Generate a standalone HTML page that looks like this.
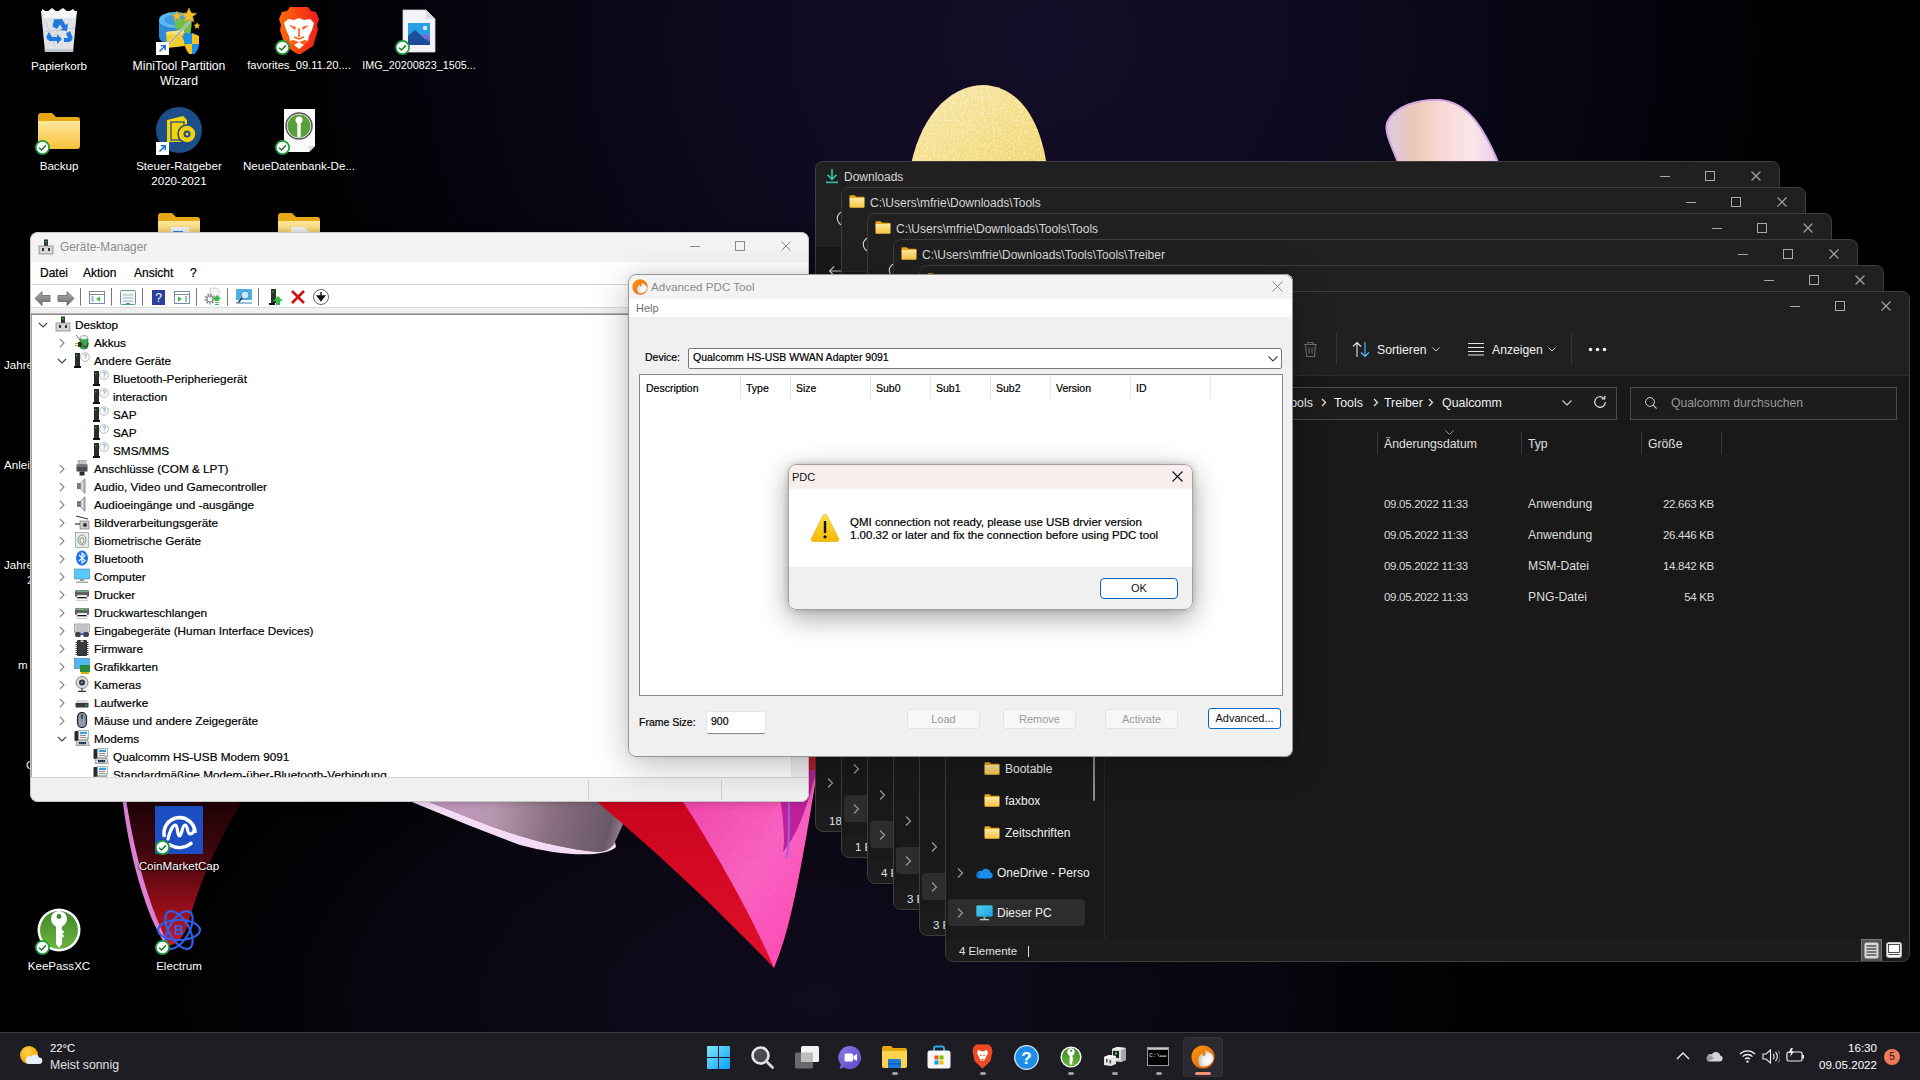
<!DOCTYPE html><html><head><meta charset="utf-8"><style>
*{box-sizing:border-box;margin:0;padding:0}
html,body{width:1920px;height:1080px;overflow:hidden}
body{position:relative;font-family:"Liberation Sans",sans-serif;background:#000;color:#000}
.abs{position:absolute}
.wp{position:absolute;left:0;top:0}
.t{position:absolute;white-space:nowrap;line-height:1}
.dl{color:#fff;font-size:11.6px;text-shadow:0 0 2px #000,0 1px 2px #000}
.expl{background:#202020;border-radius:8px;overflow:hidden}
.expl::after{content:"";position:absolute;left:0;top:0;right:0;bottom:0;border:1px solid #3d3d3d;border-radius:8px}
.expl .cont{background:#191919}
.ttl{color:#d6d6d6;font-size:12px}
.stt{color:#e0e0e0;font-size:11.5px}
.tb{color:#f0f0f0;font-size:12.2px}
.adr{color:#f0f0f0;font-size:12.4px}
.srch{color:#9a9a9a;font-size:12.2px}
.col{color:#e0e0e0;font-size:12.2px}
.fr{color:#dcdcdc;font-size:12.2px}
.frd{color:#dcdcdc;font-size:11.5px;letter-spacing:-0.3px}
.nav{color:#f0f0f0;font-size:12px}
.dm{background:#f3f3f3;border-radius:8px;overflow:hidden;box-shadow:0 0 8px rgba(0,0,0,0.25)}
.dm::after{content:"";position:absolute;left:0;top:0;right:0;bottom:0;border:1px solid #c4c4c4;border-radius:8px}
.dmttl{color:#8c8c8c;font-size:11.9px}
.dmm{color:#000;font-size:12px;-webkit-text-stroke:0.2px #000}
.dmt{color:#000;font-size:11.75px;-webkit-text-stroke:0.2px #000}
.pdc::after{content:"";position:absolute;left:0;top:0;right:0;bottom:0;border:1px solid rgba(0,0,0,0.38);border-radius:8px}
.pdc{background:#f0f0f0;border-radius:8px;overflow:hidden;box-shadow:0 8px 36px rgba(0,0,0,0.26),0 0 6px rgba(0,0,0,0.08)}
.pdcttl{color:#8a8a8a;font-size:11.6px}
.pdcm{color:#6e6e6e;font-size:11px}
.pdct{color:#000;font-size:10.5px;-webkit-text-stroke:0.2px #000}
.btnd{background:#f7f7f7;border:1px solid #e3e3e3;border-radius:3px;color:#9a9a9a;font-size:11px;text-align:center;line-height:19px}
.btna{background:#fdfdfd;border:1.5px solid #0067c0;border-radius:3px;color:#111;font-size:11px;text-align:center;line-height:18px}
.mb::after{content:"";position:absolute;left:0;top:0;right:0;bottom:0;border:1px solid rgba(0,0,0,0.33);border-radius:8px}
.mb{background:#fff;border-radius:8px;overflow:hidden;box-shadow:0 8px 28px rgba(0,0,0,0.35),0 0 6px rgba(0,0,0,0.2)}
.mbttl{color:#111;font-size:11px}
.mbt{color:#000;font-size:11.5px;-webkit-text-stroke:0.2px #000}
.btnok{background:#fff;border:1.5px solid #0067c0;border-radius:4px;color:#111;font-size:11px;text-align:center;line-height:18px}
.tbar{background:#1e1d24;border-top:1px solid #3a3a3f}
.tbw1{color:#fff;font-size:11.3px}
.tbw2{color:#e0e0e0;font-size:12.3px}
.tbc{color:#fff;font-size:11.6px}
</style></head><body><svg width="0" height="0" style="position:absolute"><defs>
<linearGradient id="fgrad" x1="0" y1="0" x2="0" y2="1"><stop offset="0" stop-color="#ffe9a0"/><stop offset="1" stop-color="#f7c440"/></linearGradient>
<linearGradient id="fgrad2" x1="0" y1="0" x2="0" y2="1"><stop offset="0" stop-color="#ffe79a"/><stop offset="1" stop-color="#f6c13a"/></linearGradient>
<linearGradient id="pcg" x1="0" y1="0" x2="1" y2="1"><stop offset="0" stop-color="#5ee0f8" stop-opacity="0.6"/><stop offset="1" stop-color="#1a90d8" stop-opacity="0.6"/></linearGradient>
</defs></svg>
<svg class="wp" width="1920" height="1080" viewBox="0 0 1920 1080">
<defs>
<radialGradient id="bgg" cx="1040" cy="40" r="760" gradientUnits="userSpaceOnUse" gradientTransform="translate(1040 40) scale(1 0.9) translate(-1040 -40)">
<stop offset="0" stop-color="#130d27"/><stop offset="0.4" stop-color="#0e0a1f"/><stop offset="0.75" stop-color="#06040e"/><stop offset="1" stop-color="#000"/>
</radialGradient>
<radialGradient id="bgg2" cx="820" cy="1000" r="640" gradientUnits="userSpaceOnUse" gradientTransform="translate(820 1000) scale(1.2 0.65) translate(-820 -1000)">
<stop offset="0" stop-color="#100b1e"/><stop offset="0.55" stop-color="#0b0814" stop-opacity="0.85"/><stop offset="1" stop-color="#000" stop-opacity="0"/>
</radialGradient>
<linearGradient id="yel" x1="0" y1="0" x2="1" y2="1"><stop offset="0" stop-color="#f6e6b0"/><stop offset="0.5" stop-color="#f5df8c"/><stop offset="1" stop-color="#f2d470"/></linearGradient>
<linearGradient id="pnk" x1="0" y1="0" x2="1" y2="0"><stop offset="0" stop-color="#e0c8e0"/><stop offset="0.25" stop-color="#ecc8b8"/><stop offset="0.45" stop-color="#f8d8d4"/><stop offset="0.75" stop-color="#fae6e8"/><stop offset="0.92" stop-color="#ecd0ec"/><stop offset="1" stop-color="#b890c8"/></linearGradient>
<linearGradient id="redg" x1="0" y1="0" x2="0" y2="1"><stop offset="0" stop-color="#c4001a"/><stop offset="1" stop-color="#e0102a"/></linearGradient>
<linearGradient id="pkg" x1="0" y1="0" x2="1" y2="1"><stop offset="0" stop-color="#e8309a"/><stop offset="0.6" stop-color="#f860c0"/><stop offset="1" stop-color="#ff40b0"/></linearGradient>
<linearGradient id="tipg" x1="0" y1="0" x2="0" y2="1"><stop offset="0" stop-color="#1a0306"/><stop offset="0.35" stop-color="#3a060c"/><stop offset="0.7" stop-color="#8a0c18"/><stop offset="1" stop-color="#c81a28"/></linearGradient>
<linearGradient id="bladeg" x1="412" y1="795" x2="640" y2="850" gradientUnits="userSpaceOnUse"><stop offset="0" stop-color="#c890c8"/><stop offset="0.35" stop-color="#b898b0"/><stop offset="0.6" stop-color="#8a7080"/><stop offset="0.85" stop-color="#6a5868"/><stop offset="1" stop-color="#d8c0d8"/></linearGradient>
<filter id="grain2" x="0" y="0" width="100%" height="100%"><feTurbulence type="fractalNoise" baseFrequency="0.45" numOctaves="2" seed="7"/><feColorMatrix values="0 0 0 0 1  0 0 0 0 0.97  0 0 0 0 0.85  0 0 0 2.2 -1.1"/><feComposite in2="SourceGraphic" operator="in"/></filter>
<filter id="grain" x="0" y="0" width="100%" height="100%"><feTurbulence type="fractalNoise" baseFrequency="0.9" numOctaves="1" seed="3"/><feColorMatrix values="0 0 0 0 1  0 0 0 0 1  0 0 0 0 0.7  0 0 0 1.6 -0.9"/><feComposite in2="SourceGraphic" operator="in"/></filter>
</defs>
<rect width="1920" height="1080" fill="url(#bgg)"/>
<rect width="1920" height="1080" fill="url(#bgg2)"/>
<!-- yellow blob -->
<path d="M909 175 C918 118 948 86 983 85 C1018 86 1042 118 1048 175 Z" fill="url(#yel)"/>
<path d="M909 175 C918 118 948 86 983 85 C1018 86 1042 118 1048 175 Z" fill="#fff" filter="url(#grain2)" opacity="0.9"/>
<!-- pink top-right shape -->
<path d="M1403 175 C1394 150 1384 134 1387 123 C1394 106 1418 99 1440 100 C1466 102 1484 124 1503 175 Z" fill="url(#pnk)" stroke="#cfa8e0" stroke-width="2"/>
<!-- bottom left petal tip -->
<path d="M122 795 C128 850 145 915 166 945 C172 947 180 942 186 930 C194 905 205 860 246 795 Z" fill="url(#tipg)"/>
<path d="M122 795 C128 850 145 915 166 945 L169 945 C151 912 134 855 125.5 795 Z" fill="#e088e0" opacity="0.95"/>
<!-- pale blade -->
<path d="M412 795 L470 818 C520 838 560 849 598 852 C606 852 612 848 615 842 L636 795 Z" fill="url(#bladeg)"/>
<path d="M412 795 L470 818 C520 838 560 849 598 852 C606 852 612 848 615 842 L616 847 C605 858 560 856 520 845 L468 825 L412 802Z" fill="#f3dcf3"/>
<!-- red wedge -->
<path d="M520 740 C600 800 700 890 774 968 C790 930 800 880 822 740 Z" fill="url(#redg)"/>
<path d="M640 740 C700 820 752 915 774 968 C790 930 800 880 822 740 Z" fill="url(#pkg)"/>
<path d="M640 740 C700 820 752 915 774 968 C790 930 800 880 822 740 Z" fill="#fff" filter="url(#grain)" opacity="0.35"/>
<path d="M770 740 C782 800 786 835 783 852 C797 835 808 810 824 740Z" fill="#c0209a"/>
<path d="M786 740 C790 800 790 850 786 858" stroke="#9a60e0" stroke-width="2" fill="none"/>
<path d="M808 740 L822 740 L818 770 L808 770Z" fill="#c81a2a"/>
</svg><svg class="abs" style="left:35px;top:6px" width="48" height="48" viewBox="0 0 48 48"><path d="M6 5 L42 5 L38 46 L10 46Z" fill="#dfe3e8"/><path d="M6 5 L42 5 L40 12 L8 12Z" fill="#f4f6f8"/><path d="M7 3 L12 6 L17 2 L22 6 L28 2 L33 6 L38 3 L41 6 L7 6Z" fill="#fafafa"/><path d="M10 14 L20 40 M18 12 L36 30 M30 14 L14 38 M8 26 L40 22" stroke="#c6ccd4" stroke-width="1"/><path d="M10 46 L38 46 L38.5 43 L9.5 43Z" fill="#bfc5cc"/><g fill="#1f7ae0"><path d="M19 13.5 L27 13 L30.5 19 L33 17.5 L32 25 L25 24 L27.5 22.5 L25 18.5 L22 23 L17.5 20.5Z"/><path d="M14 26 L17 31 L22 31 L22 28 L27 33 L22 38 L22 35 L15 35 Q11 34 11.5 30Z"/><path d="M35 25 L37.5 31 Q38 35 34 36 L29 36 L29 32 L33 32 L31 27.5Z"/></g></svg><div class="t dl" style="left:-1px;top:60px;width:120px;text-align:center">Papierkorb</div><svg class="abs" style="left:155px;top:6px" width="48" height="48" viewBox="0 0 48 48"><path d="M4 14 V30 Q4 38 20 38 Q36 38 36 30 V14Z" fill="#2f8ad8"/><ellipse cx="20" cy="14" rx="16" ry="8" fill="#5cb8f0"/><ellipse cx="20" cy="14" rx="11" ry="5" fill="#3e9de0"/><path d="M20 14 L36 12 Q38 22 34 28 L20 22Z" fill="#6cc04a"/><path d="M11 26 L28 24 L30 40 L12 42Z" fill="#f2cf2a"/><path d="M11 26 L28 24 L30 27 L13 29Z" fill="#fae27a"/><path d="M14 38 L38 12" stroke="#e0e0e0" stroke-width="2.2"/><path d="M14 38 L38 12" stroke="#666" stroke-width="0.8"/><path d="M34 2 L36.3 7 L41.5 7.4 L37.5 10.8 L38.8 16 L34 13.2 L29.2 16 L30.5 10.8 L26.5 7.4 L31.7 7Z" fill="#f0c028" stroke="#c89a10" stroke-width="0.6"/><path d="M22 5 L23.5 8.5 L27 8.7 L24.3 11 L25.2 14.5 L22 12.6 L18.8 14.5 L19.7 11 L17 8.7 L20.5 8.5Z" fill="#f0c028" stroke="#c89a10" stroke-width="0.5"/><path d="M42 16 L43 18.5 L45.5 18.7 L43.6 20.3 L44.2 22.8 L42 21.5 L39.8 22.8 L40.4 20.3 L38.5 18.7 L41 18.5Z" fill="#f0c028"/><path d="M27 30 L38 27 L44 30 V38 Q44 45 37 50 Q30 45 30 38Z" fill="#1f8ee8"/><path d="M37 27.5 L44 30 V38 H37Z" fill="#f6c21a"/><path d="M30 38 H37 V50 Q30 45 30 38Z" fill="#f6c21a"/></svg><svg class="abs" style="left:156px;top:42px" width="13" height="13" viewBox="0 0 13 13"><rect x="0" y="0" width="13" height="13" fill="#fff"/><path d="M3.5 9.5L9 4M5 3.8H9.2V8" stroke="#1a6fd0" stroke-width="1.5" fill="none"/></svg><div class="t dl" style="font-size:12.2px;left:119px;top:60px;width:120px;text-align:center">MiniTool Partition</div><div class="t dl" style="font-size:12.2px;left:119px;top:75px;width:120px;text-align:center">Wizard</div><svg class="abs" style="left:275px;top:6px" width="48" height="48" viewBox="0 0 48 48"><defs><linearGradient id="brg" x1="0" y1="0" x2="1" y2="0"><stop offset="0" stop-color="#ff6a00"/><stop offset="1" stop-color="#f01e1e"/></linearGradient></defs><path d="M15 1 H33 L36 5 L41 6 L44 13 L42 19 L43 24 L38 40 L24 49 L10 40 L5 24 L6 19 L4 13 L7 6 L12 5Z" fill="url(#brg)"/><path d="M9 17 L13 13 L19 14 L24 12 L29 14 L35 13 L39 17 L37 24 L34 30 L33 35 L28 39 L24 41 L20 39 L15 35 L14 30 L11 24Z" fill="#fff"/><path d="M14 19 L21 21 L20 24 Z M34 19 L27 21 L28 24Z" fill="#ff5a10"/><path d="M24 22 L24 31 M19 31 L24 33 L29 31" stroke="#ff5a10" stroke-width="1.6" fill="none"/><path d="M15 35 L20 39 L24 41 L28 39 L33 35 L30 34 L24 36 L18 34Z" fill="#ff5a10"/><path d="M19 39 L24 36 L29 39 L24 43Z" fill="#fff"/></svg><svg class="abs" style="left:275px;top:40px" width="15" height="15" viewBox="0 0 14 14"><circle cx="7" cy="7" r="6.2" fill="#fff" stroke="#1e9e3a" stroke-width="1.6"/><path d="M3.8 7.2L6 9.3L10.2 5" stroke="#1a7f30" stroke-width="1.5" fill="none"/></svg><div class="t dl" style="font-size:11.2px;left:239px;top:60px;width:120px;text-align:center">favorites_09.11.20....</div><svg class="abs" style="left:395px;top:6px" width="48" height="48" viewBox="0 0 48 48"><path d="M8 4 H31 L40 13 V46 H8Z" fill="#f4f4f6" stroke="#d8d8dc" stroke-width="0.8"/><path d="M31 4 V13 H40Z" fill="#dcdce0"/><rect x="13" y="17" width="22" height="22" fill="#28a0e8"/><path d="M13 39 V30 L20 24 L30 33 L33 31 L35 33 V39Z" fill="#1c4c9a"/><path d="M26 30 L31 27 L35 31 V36Z" fill="#7a6ad8" opacity="0.9"/><circle cx="30" cy="22" r="2.2" fill="#d8ecf8"/></svg><svg class="abs" style="left:395px;top:40px" width="15" height="15" viewBox="0 0 14 14"><circle cx="7" cy="7" r="6.2" fill="#fff" stroke="#1e9e3a" stroke-width="1.6"/><path d="M3.8 7.2L6 9.3L10.2 5" stroke="#1a7f30" stroke-width="1.5" fill="none"/></svg><div class="t dl" style="font-size:10.8px;left:359px;top:60px;width:120px;text-align:center">IMG_20200823_1505...</div><svg class="abs" style="left:35px;top:106px" width="48" height="48" viewBox="0 0 48 48"><path d="M3 10 Q3 7 6 7 H17 L21 11 H42 Q45 11 45 14 V17 H3Z" fill="#e8a716"/><path d="M3 15 H45 V40 Q45 43 42 43 H6 Q3 43 3 40Z" fill="url(#fgrad2)"/></svg><svg class="abs" style="left:35px;top:140px" width="15" height="15" viewBox="0 0 14 14"><circle cx="7" cy="7" r="6.2" fill="#fff" stroke="#1e9e3a" stroke-width="1.6"/><path d="M3.8 7.2L6 9.3L10.2 5" stroke="#1a7f30" stroke-width="1.5" fill="none"/></svg><div class="t dl" style="left:-1px;top:160px;width:120px;text-align:center">Backup</div><svg class="abs" style="left:155px;top:106px" width="48" height="48" viewBox="0 0 48 48"><circle cx="24" cy="24" r="23" fill="#1c4f8a"/><path d="M12 36 L12 14 L28 10 L32 14 V36Z" fill="#f5d20a"/><rect x="16" y="16" width="13" height="18" fill="#f5d20a" stroke="#1c4f8a" stroke-width="1.3"/><circle cx="32" cy="28" r="9" fill="#f5d20a" stroke="#1c4f8a" stroke-width="1.5"/><circle cx="32" cy="28" r="3.5" fill="#1c4f8a"/><circle cx="32" cy="28" r="1.5" fill="#f5d20a"/></svg><svg class="abs" style="left:156px;top:142px" width="13" height="13" viewBox="0 0 13 13"><rect x="0" y="0" width="13" height="13" fill="#fff"/><path d="M3.5 9.5L9 4M5 3.8H9.2V8" stroke="#1a6fd0" stroke-width="1.5" fill="none"/></svg><div class="t dl" style="left:119px;top:160px;width:120px;text-align:center">Steuer-Ratgeber</div><div class="t dl" style="left:119px;top:175px;width:120px;text-align:center">2020-2021</div><svg class="abs" style="left:275px;top:106px" width="48" height="48" viewBox="0 0 48 48"><path d="M9 3 H40 V40 L34 46 H9Z" fill="#fafafa"/><path d="M34 46 V40 H40" fill="#ddd"/><circle cx="24" cy="20" r="13" fill="#fff" stroke="#555" stroke-width="1.5"/><circle cx="24" cy="20" r="11.5" fill="#5aa03a"/><circle cx="24" cy="14" r="3.5" fill="#fff"/><rect x="22.3" y="16" width="3.4" height="15" fill="#fff"/></svg><svg class="abs" style="left:275px;top:140px" width="15" height="15" viewBox="0 0 14 14"><circle cx="7" cy="7" r="6.2" fill="#fff" stroke="#1e9e3a" stroke-width="1.6"/><path d="M3.8 7.2L6 9.3L10.2 5" stroke="#1a7f30" stroke-width="1.5" fill="none"/></svg><div class="t dl" style="left:239px;top:160px;width:120px;text-align:center">NeueDatenbank-De...</div><svg class="abs" style="left:155px;top:206px" width="48" height="48" viewBox="0 0 48 48"><path d="M3 10 Q3 7 6 7 H17 L21 11 H42 Q45 11 45 14 V17 H3Z" fill="#e8a716"/><path d="M3 15 H45 V40 Q45 43 42 43 H6 Q3 43 3 40Z" fill="url(#fgrad2)"/><rect x="16" y="21" width="18" height="20" fill="#f0f4f8"/><rect x="18" y="25" width="10" height="8" fill="#2a8ae0"/></svg><svg class="abs" style="left:275px;top:206px" width="48" height="48" viewBox="0 0 48 48"><path d="M3 10 Q3 7 6 7 H17 L21 11 H42 Q45 11 45 14 V17 H3Z" fill="#e8a716"/><path d="M3 15 H45 V40 Q45 43 42 43 H6 Q3 43 3 40Z" fill="url(#fgrad2)"/><path d="M16 21 H29 L34 26 V43 H16Z" fill="#f4f4f4"/></svg><svg class="abs" style="left:155px;top:806px" width="48" height="48" viewBox="0 0 48 48"><rect x="0" y="0" width="48" height="48" fill="#1d4ec4"/><path d="M9.5 31 A15.5 15.5 0 1 1 40 27" stroke="#fff" stroke-width="3.6" fill="none"/><path d="M13 33 C15 24 18 19 20.5 19 C23 19 22 30 24.5 30 C27 30 27 19 30 19 C33 19 32 28 35 28 C37 28 38.5 26 39.5 24" stroke="#fff" stroke-width="3.2" fill="none" stroke-linecap="round"/><path d="M15 39 C22 43 30 42 36 37.5" stroke="#fff" stroke-width="3.6" fill="none" stroke-linecap="round"/></svg><svg class="abs" style="left:155px;top:840px" width="15" height="15" viewBox="0 0 14 14"><circle cx="7" cy="7" r="6.2" fill="#fff" stroke="#1e9e3a" stroke-width="1.6"/><path d="M3.8 7.2L6 9.3L10.2 5" stroke="#1a7f30" stroke-width="1.5" fill="none"/></svg><div class="t dl" style="left:119px;top:860px;width:120px;text-align:center">CoinMarketCap</div><svg class="abs" style="left:35px;top:906px" width="48" height="48" viewBox="0 0 48 48"><defs><linearGradient id="kpg" x1="0" y1="0" x2="0" y2="1"><stop offset="0" stop-color="#3f8a2a"/><stop offset="1" stop-color="#6cb43e"/></linearGradient></defs><circle cx="24" cy="24" r="21.5" fill="#fff"/><circle cx="24" cy="24" r="19" fill="url(#kpg)"/><circle cx="24" cy="13" r="8" fill="#fff"/><path d="M21 18 H27 V24 L29.5 26 L27 28 L29.5 30 L27 32 V38 L24 42 L21 38Z" fill="#fff"/><circle cx="24" cy="10.5" r="2.4" fill="#3f8a2a"/></svg><svg class="abs" style="left:35px;top:940px" width="15" height="15" viewBox="0 0 14 14"><circle cx="7" cy="7" r="6.2" fill="#fff" stroke="#1e9e3a" stroke-width="1.6"/><path d="M3.8 7.2L6 9.3L10.2 5" stroke="#1a7f30" stroke-width="1.5" fill="none"/></svg><div class="t dl" style="left:-1px;top:960px;width:120px;text-align:center">KeePassXC</div><svg class="abs" style="left:155px;top:906px" width="48" height="48" viewBox="0 0 48 48"><g fill="none" stroke="#2f5fe8" stroke-width="2.2"><ellipse cx="24" cy="24" rx="21" ry="10"/><ellipse cx="24" cy="24" rx="21" ry="10" transform="rotate(60 24 24)"/><ellipse cx="24" cy="24" rx="21" ry="10" transform="rotate(-60 24 24)"/></g><text x="24" y="29" font-size="14" font-weight="bold" text-anchor="middle" fill="#2f5fe8" font-family="Liberation Sans">B</text></svg><svg class="abs" style="left:155px;top:940px" width="15" height="15" viewBox="0 0 14 14"><circle cx="7" cy="7" r="6.2" fill="#fff" stroke="#1e9e3a" stroke-width="1.6"/><path d="M3.8 7.2L6 9.3L10.2 5" stroke="#1a7f30" stroke-width="1.5" fill="none"/></svg><div class="t dl" style="left:119px;top:960px;width:120px;text-align:center">Electrum</div><div class="t dl" style="left:4px;top:359px">Jahre</div><div class="t dl" style="left:4px;top:459px">Anlei</div><div class="t dl" style="left:4px;top:559px">Jahre</div><div class="t dl" style="left:27px;top:574px">2</div><div class="t dl" style="left:18px;top:659px">m</div><div class="t dl" style="left:26px;top:759px">C</div><div class="abs expl" style="left:815px;top:161px;width:965px;height:671px"><svg class="abs" style="left:10px;top:7px" width="14" height="16" viewBox="0 0 14 16"><path d="M7 1 V11 M2.5 6.8 L7 11.3 L11.5 6.8" stroke="#2fc8a6" stroke-width="1.6" fill="none"/><rect x="1" y="13.6" width="12" height="1.6" fill="#2fc8a6"/></svg><div class="t ttl" style="left:29px;top:10px">Downloads</div><div class="abs" style="left:845px;top:15px;width:10px;height:1px;background:#a8a8a8"></div><div class="abs" style="left:890px;top:10px;width:10px;height:10px;border:1px solid #a8a8a8"></div><svg class="abs" style="left:936px;top:10px" width="10" height="10" viewBox="0 0 10 10"><path d="M0.5 0.5 L9.5 9.5 M9.5 0.5 L0.5 9.5" stroke="#a8a8a8" stroke-width="1.1"/></svg><svg class="abs" style="left:21px;top:49px" width="17" height="17" viewBox="0 0 17 17"><circle cx="8.5" cy="8.5" r="7.2" stroke="#d8d8d8" stroke-width="1.1" fill="none"/><path d="M8.5 5V12M5 8.5H12" stroke="#4cc2ff" stroke-width="1.1"/></svg><div class="abs" style="left:1px;top:84px;width:963px;height:1px;background:#2b2b2b"></div><div class="abs cont" style="left:1px;top:85px;width:963px;height:585px"></div><svg class="abs" style="left:13px;top:104px" width="14" height="12" viewBox="0 0 14 12"><path d="M13 6H1.5 M6 1.5 L1.5 6 L6 10.5" stroke="#c8c8c8" stroke-width="1.1" fill="none"/></svg><svg class="abs" style="left:11px;top:576px" width="8" height="12" viewBox="0 0 8 12"><path d="M2 1.5 L6.5 6 L2 10.5" stroke="#9a9a9a" stroke-width="1.2" fill="none"/></svg><svg class="abs" style="left:11px;top:616px" width="8" height="12" viewBox="0 0 8 12"><path d="M2 1.5 L6.5 6 L2 10.5" stroke="#9a9a9a" stroke-width="1.2" fill="none"/></svg><div class="abs" style="left:1px;top:648px;width:963px;height:22px;background:#1c1c1c;border-radius:0 0 7px 7px"></div><div class="t stt" style="left:14px;top:655px">18</div></div><div class="abs expl" style="left:841px;top:187px;width:965px;height:671px"><svg class="abs" style="left:8px;top:8px" width="16" height="13" viewBox="0 0 16 13"><path d="M0.5 1.3 Q0.5 0.3 1.5 0.3 H5.6 L7.2 1.8 H14.5 Q15.5 1.8 15.5 2.8 V3.5 H0.5Z" fill="#e8a716"/><path d="M0.5 3 H15.5 V11.7 Q15.5 12.7 14.5 12.7 H1.5 Q0.5 12.7 0.5 11.7Z" fill="url(#fgrad)"/></svg><div class="t ttl" style="left:29px;top:10px">C:\Users\mfrie\Downloads\Tools</div><div class="abs" style="left:845px;top:15px;width:10px;height:1px;background:#a8a8a8"></div><div class="abs" style="left:890px;top:10px;width:10px;height:10px;border:1px solid #a8a8a8"></div><svg class="abs" style="left:936px;top:10px" width="10" height="10" viewBox="0 0 10 10"><path d="M0.5 0.5 L9.5 9.5 M9.5 0.5 L0.5 9.5" stroke="#a8a8a8" stroke-width="1.1"/></svg><svg class="abs" style="left:21px;top:49px" width="17" height="17" viewBox="0 0 17 17"><circle cx="8.5" cy="8.5" r="7.2" stroke="#d8d8d8" stroke-width="1.1" fill="none"/><path d="M8.5 5V12M5 8.5H12" stroke="#4cc2ff" stroke-width="1.1"/></svg><div class="abs" style="left:1px;top:84px;width:963px;height:1px;background:#2b2b2b"></div><div class="abs cont" style="left:1px;top:85px;width:963px;height:585px"></div><svg class="abs" style="left:13px;top:104px" width="14" height="12" viewBox="0 0 14 12"><path d="M13 6H1.5 M6 1.5 L1.5 6 L6 10.5" stroke="#c8c8c8" stroke-width="1.1" fill="none"/></svg><svg class="abs" style="left:11px;top:576px" width="8" height="12" viewBox="0 0 8 12"><path d="M2 1.5 L6.5 6 L2 10.5" stroke="#9a9a9a" stroke-width="1.2" fill="none"/></svg><div class="abs" style="left:3px;top:608px;width:137px;height:27px;background:#2d2d2d;border-radius:4px"></div><svg class="abs" style="left:11px;top:616px" width="8" height="12" viewBox="0 0 8 12"><path d="M2 1.5 L6.5 6 L2 10.5" stroke="#9a9a9a" stroke-width="1.2" fill="none"/></svg><div class="abs" style="left:1px;top:648px;width:963px;height:22px;background:#1c1c1c;border-radius:0 0 7px 7px"></div><div class="t stt" style="left:14px;top:655px">1 Element</div></div><div class="abs expl" style="left:867px;top:213px;width:965px;height:671px"><svg class="abs" style="left:8px;top:8px" width="16" height="13" viewBox="0 0 16 13"><path d="M0.5 1.3 Q0.5 0.3 1.5 0.3 H5.6 L7.2 1.8 H14.5 Q15.5 1.8 15.5 2.8 V3.5 H0.5Z" fill="#e8a716"/><path d="M0.5 3 H15.5 V11.7 Q15.5 12.7 14.5 12.7 H1.5 Q0.5 12.7 0.5 11.7Z" fill="url(#fgrad)"/></svg><div class="t ttl" style="left:29px;top:10px">C:\Users\mfrie\Downloads\Tools\Tools</div><div class="abs" style="left:845px;top:15px;width:10px;height:1px;background:#a8a8a8"></div><div class="abs" style="left:890px;top:10px;width:10px;height:10px;border:1px solid #a8a8a8"></div><svg class="abs" style="left:936px;top:10px" width="10" height="10" viewBox="0 0 10 10"><path d="M0.5 0.5 L9.5 9.5 M9.5 0.5 L0.5 9.5" stroke="#a8a8a8" stroke-width="1.1"/></svg><svg class="abs" style="left:21px;top:49px" width="17" height="17" viewBox="0 0 17 17"><circle cx="8.5" cy="8.5" r="7.2" stroke="#d8d8d8" stroke-width="1.1" fill="none"/><path d="M8.5 5V12M5 8.5H12" stroke="#4cc2ff" stroke-width="1.1"/></svg><div class="abs" style="left:1px;top:84px;width:963px;height:1px;background:#2b2b2b"></div><div class="abs cont" style="left:1px;top:85px;width:963px;height:585px"></div><svg class="abs" style="left:13px;top:104px" width="14" height="12" viewBox="0 0 14 12"><path d="M13 6H1.5 M6 1.5 L1.5 6 L6 10.5" stroke="#c8c8c8" stroke-width="1.1" fill="none"/></svg><svg class="abs" style="left:11px;top:576px" width="8" height="12" viewBox="0 0 8 12"><path d="M2 1.5 L6.5 6 L2 10.5" stroke="#9a9a9a" stroke-width="1.2" fill="none"/></svg><div class="abs" style="left:3px;top:608px;width:137px;height:27px;background:#2d2d2d;border-radius:4px"></div><svg class="abs" style="left:11px;top:616px" width="8" height="12" viewBox="0 0 8 12"><path d="M2 1.5 L6.5 6 L2 10.5" stroke="#9a9a9a" stroke-width="1.2" fill="none"/></svg><div class="abs" style="left:1px;top:648px;width:963px;height:22px;background:#1c1c1c;border-radius:0 0 7px 7px"></div><div class="t stt" style="left:14px;top:655px">4 Elemente</div></div><div class="abs expl" style="left:893px;top:239px;width:965px;height:671px"><svg class="abs" style="left:8px;top:8px" width="16" height="13" viewBox="0 0 16 13"><path d="M0.5 1.3 Q0.5 0.3 1.5 0.3 H5.6 L7.2 1.8 H14.5 Q15.5 1.8 15.5 2.8 V3.5 H0.5Z" fill="#e8a716"/><path d="M0.5 3 H15.5 V11.7 Q15.5 12.7 14.5 12.7 H1.5 Q0.5 12.7 0.5 11.7Z" fill="url(#fgrad)"/></svg><div class="t ttl" style="left:29px;top:10px">C:\Users\mfrie\Downloads\Tools\Tools\Treiber</div><div class="abs" style="left:845px;top:15px;width:10px;height:1px;background:#a8a8a8"></div><div class="abs" style="left:890px;top:10px;width:10px;height:10px;border:1px solid #a8a8a8"></div><svg class="abs" style="left:936px;top:10px" width="10" height="10" viewBox="0 0 10 10"><path d="M0.5 0.5 L9.5 9.5 M9.5 0.5 L0.5 9.5" stroke="#a8a8a8" stroke-width="1.1"/></svg><svg class="abs" style="left:21px;top:49px" width="17" height="17" viewBox="0 0 17 17"><circle cx="8.5" cy="8.5" r="7.2" stroke="#d8d8d8" stroke-width="1.1" fill="none"/><path d="M8.5 5V12M5 8.5H12" stroke="#4cc2ff" stroke-width="1.1"/></svg><div class="abs" style="left:1px;top:84px;width:963px;height:1px;background:#2b2b2b"></div><div class="abs cont" style="left:1px;top:85px;width:963px;height:585px"></div><svg class="abs" style="left:13px;top:104px" width="14" height="12" viewBox="0 0 14 12"><path d="M13 6H1.5 M6 1.5 L1.5 6 L6 10.5" stroke="#c8c8c8" stroke-width="1.1" fill="none"/></svg><svg class="abs" style="left:11px;top:576px" width="8" height="12" viewBox="0 0 8 12"><path d="M2 1.5 L6.5 6 L2 10.5" stroke="#9a9a9a" stroke-width="1.2" fill="none"/></svg><div class="abs" style="left:3px;top:608px;width:137px;height:27px;background:#2d2d2d;border-radius:4px"></div><svg class="abs" style="left:11px;top:616px" width="8" height="12" viewBox="0 0 8 12"><path d="M2 1.5 L6.5 6 L2 10.5" stroke="#9a9a9a" stroke-width="1.2" fill="none"/></svg><div class="abs" style="left:1px;top:648px;width:963px;height:22px;background:#1c1c1c;border-radius:0 0 7px 7px"></div><div class="t stt" style="left:14px;top:655px">3 Elemente</div></div><div class="abs expl" style="left:919px;top:265px;width:965px;height:671px"><svg class="abs" style="left:8px;top:8px" width="16" height="13" viewBox="0 0 16 13"><path d="M0.5 1.3 Q0.5 0.3 1.5 0.3 H5.6 L7.2 1.8 H14.5 Q15.5 1.8 15.5 2.8 V3.5 H0.5Z" fill="#e8a716"/><path d="M0.5 3 H15.5 V11.7 Q15.5 12.7 14.5 12.7 H1.5 Q0.5 12.7 0.5 11.7Z" fill="url(#fgrad)"/></svg><div class="t ttl" style="left:29px;top:10px">Qualcomm</div><div class="abs" style="left:845px;top:15px;width:10px;height:1px;background:#a8a8a8"></div><div class="abs" style="left:890px;top:10px;width:10px;height:10px;border:1px solid #a8a8a8"></div><svg class="abs" style="left:936px;top:10px" width="10" height="10" viewBox="0 0 10 10"><path d="M0.5 0.5 L9.5 9.5 M9.5 0.5 L0.5 9.5" stroke="#a8a8a8" stroke-width="1.1"/></svg><svg class="abs" style="left:21px;top:49px" width="17" height="17" viewBox="0 0 17 17"><circle cx="8.5" cy="8.5" r="7.2" stroke="#d8d8d8" stroke-width="1.1" fill="none"/><path d="M8.5 5V12M5 8.5H12" stroke="#4cc2ff" stroke-width="1.1"/></svg><div class="abs" style="left:1px;top:84px;width:963px;height:1px;background:#2b2b2b"></div><div class="abs cont" style="left:1px;top:85px;width:963px;height:585px"></div><svg class="abs" style="left:13px;top:104px" width="14" height="12" viewBox="0 0 14 12"><path d="M13 6H1.5 M6 1.5 L1.5 6 L6 10.5" stroke="#c8c8c8" stroke-width="1.1" fill="none"/></svg><svg class="abs" style="left:11px;top:576px" width="8" height="12" viewBox="0 0 8 12"><path d="M2 1.5 L6.5 6 L2 10.5" stroke="#9a9a9a" stroke-width="1.2" fill="none"/></svg><div class="abs" style="left:3px;top:608px;width:137px;height:27px;background:#2d2d2d;border-radius:4px"></div><svg class="abs" style="left:11px;top:616px" width="8" height="12" viewBox="0 0 8 12"><path d="M2 1.5 L6.5 6 L2 10.5" stroke="#9a9a9a" stroke-width="1.2" fill="none"/></svg><div class="abs" style="left:1px;top:648px;width:963px;height:22px;background:#1c1c1c;border-radius:0 0 7px 7px"></div><div class="t stt" style="left:14px;top:655px">3 Elemente</div></div><div class="abs expl" style="left:945px;top:291px;width:965px;height:671px"><svg class="abs" style="left:8px;top:8px" width="16" height="13" viewBox="0 0 16 13"><path d="M0.5 1.3 Q0.5 0.3 1.5 0.3 H5.6 L7.2 1.8 H14.5 Q15.5 1.8 15.5 2.8 V3.5 H0.5Z" fill="#e8a716"/><path d="M0.5 3 H15.5 V11.7 Q15.5 12.7 14.5 12.7 H1.5 Q0.5 12.7 0.5 11.7Z" fill="url(#fgrad)"/></svg><div class="t ttl" style="left:29px;top:10px">Qualcomm</div><div class="abs" style="left:845px;top:15px;width:10px;height:1px;background:#a8a8a8"></div><div class="abs" style="left:890px;top:10px;width:10px;height:10px;border:1px solid #a8a8a8"></div><svg class="abs" style="left:936px;top:10px" width="10" height="10" viewBox="0 0 10 10"><path d="M0.5 0.5 L9.5 9.5 M9.5 0.5 L0.5 9.5" stroke="#a8a8a8" stroke-width="1.1"/></svg><svg class="abs" style="left:21px;top:49px" width="17" height="17" viewBox="0 0 17 17"><circle cx="8.5" cy="8.5" r="7.2" stroke="#d8d8d8" stroke-width="1.1" fill="none"/><path d="M8.5 5V12M5 8.5H12" stroke="#4cc2ff" stroke-width="1.1"/></svg><div class="abs" style="left:1px;top:84px;width:963px;height:1px;background:#2b2b2b"></div><div class="abs cont" style="left:1px;top:85px;width:963px;height:585px"></div><svg class="abs" style="left:13px;top:104px" width="14" height="12" viewBox="0 0 14 12"><path d="M13 6H1.5 M6 1.5 L1.5 6 L6 10.5" stroke="#c8c8c8" stroke-width="1.1" fill="none"/></svg><svg class="abs" style="left:11px;top:576px" width="8" height="12" viewBox="0 0 8 12"><path d="M2 1.5 L6.5 6 L2 10.5" stroke="#9a9a9a" stroke-width="1.2" fill="none"/></svg><div class="abs" style="left:3px;top:608px;width:137px;height:27px;background:#2d2d2d;border-radius:4px"></div><svg class="abs" style="left:11px;top:616px" width="8" height="12" viewBox="0 0 8 12"><path d="M2 1.5 L6.5 6 L2 10.5" stroke="#9a9a9a" stroke-width="1.2" fill="none"/></svg><div class="abs" style="left:1px;top:648px;width:963px;height:22px;background:#1c1c1c;border-radius:0 0 7px 7px"></div><div class="t stt" style="left:14px;top:655px">4 Elemente</div><svg class="abs" style="left:358px;top:50px" width="15" height="17" viewBox="0 0 15 17"><path d="M1 3.5H14 M5 3.5 V1.5 H10 V3.5 M2.5 3.5 L3.5 15.5 H11.5 L12.5 3.5 M6 6.5V12.5 M9 6.5V12.5" stroke="#6d6d6d" stroke-width="1.1" fill="none"/></svg><div class="abs" style="left:391px;top:42px;width:1px;height:32px;background:#353535"></div><svg class="abs" style="left:407px;top:50px" width="18" height="17" viewBox="0 0 18 17"><path d="M5 16V1.5 M1 5.5 L5 1.5 L9 5.5" stroke="#e6e6e6" stroke-width="1.1" fill="none"/><path d="M13 1V15.5 M9 11.5 L13 15.5 L17 11.5" stroke="#4cc2ff" stroke-width="1.1" fill="none"/></svg><div class="t tb" style="left:432px;top:53px">Sortieren</div><svg class="abs" style="left:487px;top:56px" width="8" height="5" viewBox="0 0 8 5"><path d="M0.5 0.5L4 4L7.5 0.5" stroke="#cfcfcf" stroke-width="1" fill="none"/></svg><svg class="abs" style="left:523px;top:51px" width="16" height="14" viewBox="0 0 16 14"><path d="M0 1.5H16M0 5.5H16M0 9.5H16M0 13H16" stroke="#e6e6e6" stroke-width="1"/></svg><div class="t tb" style="left:547px;top:53px">Anzeigen</div><svg class="abs" style="left:603px;top:56px" width="8" height="5" viewBox="0 0 8 5"><path d="M0.5 0.5L4 4L7.5 0.5" stroke="#cfcfcf" stroke-width="1" fill="none"/></svg><div class="abs" style="left:626px;top:42px;width:1px;height:32px;background:#353535"></div><svg class="abs" style="left:643px;top:56px" width="19" height="5" viewBox="0 0 19 5"><circle cx="2.5" cy="2.5" r="1.8" fill="#f0f0f0"/><circle cx="9.5" cy="2.5" r="1.8" fill="#f0f0f0"/><circle cx="16.5" cy="2.5" r="1.8" fill="#f0f0f0"/></svg><div class="abs" style="left:160px;top:96px;width:512px;height:33px;border:1px solid #4a4a4a;background:#1c1c1c"></div><div class="t adr" style="left:339px;top:106px">Tools</div><div class="t adr" style="left:389px;top:106px">Tools</div><div class="t adr" style="left:439px;top:106px">Treiber</div><div class="t adr" style="left:497px;top:106px">Qualcomm</div><svg class="abs" style="left:376px;top:107px" width="6" height="9" viewBox="0 0 6 9"><path d="M1 1L4.5 4.5L1 8" stroke="#e0e0e0" stroke-width="1.3" fill="none"/></svg><svg class="abs" style="left:428px;top:107px" width="6" height="9" viewBox="0 0 6 9"><path d="M1 1L4.5 4.5L1 8" stroke="#e0e0e0" stroke-width="1.3" fill="none"/></svg><svg class="abs" style="left:483px;top:107px" width="6" height="9" viewBox="0 0 6 9"><path d="M1 1L4.5 4.5L1 8" stroke="#e0e0e0" stroke-width="1.3" fill="none"/></svg><svg class="abs" style="left:617px;top:109px" width="10" height="6" viewBox="0 0 10 6"><path d="M0.5 0.5L5 5L9.5 0.5" stroke="#d0d0d0" stroke-width="1.1" fill="none"/></svg><svg class="abs" style="left:648px;top:104px" width="14" height="14" viewBox="0 0 14 14"><path d="M12.3 7 A5.3 5.3 0 1 1 10.6 3.1" stroke="#e0e0e0" stroke-width="1.2" fill="none"/><path d="M11.8 0.8 V3.9 H8.7" stroke="#e0e0e0" stroke-width="1.2" fill="none"/></svg><div class="abs" style="left:685px;top:96px;width:267px;height:33px;border:1px solid #4a4a4a;background:#1c1c1c"></div><svg class="abs" style="left:699px;top:105px" width="14" height="14" viewBox="0 0 14 14"><circle cx="6" cy="6" r="4.4" stroke="#d0d0d0" stroke-width="1" fill="none"/><path d="M9.2 9.2 L12.6 12.6" stroke="#d0d0d0" stroke-width="1.1"/></svg><div class="t srch" style="left:726px;top:106px">Qualcomm durchsuchen</div><div class="abs" style="left:432px;top:141px;width:1px;height:23px;background:#3a3a3a"></div><div class="abs" style="left:576px;top:141px;width:1px;height:23px;background:#3a3a3a"></div><div class="abs" style="left:696px;top:141px;width:1px;height:23px;background:#3a3a3a"></div><div class="abs" style="left:776px;top:141px;width:1px;height:23px;background:#3a3a3a"></div><svg class="abs" style="left:500px;top:139px" width="9" height="5" viewBox="0 0 9 5"><path d="M0.5 0.5L4.5 4.5L8.5 0.5" stroke="#9a9a9a" stroke-width="1" fill="none"/></svg><div class="t col" style="left:439px;top:147px">Änderungsdatum</div><div class="t col" style="left:583px;top:147px">Typ</div><div class="t col" style="left:703px;top:147px">Größe</div><div class="t frd" style="left:439px;top:208px">09.05.2022 11:33</div><div class="t fr" style="left:583px;top:207px">Anwendung</div><div class="t frd" style="left:660px;top:208px;width:109px;text-align:right">22.663 KB</div><div class="t frd" style="left:439px;top:239px">09.05.2022 11:33</div><div class="t fr" style="left:583px;top:238px">Anwendung</div><div class="t frd" style="left:660px;top:239px;width:109px;text-align:right">26.446 KB</div><div class="t frd" style="left:439px;top:270px">09.05.2022 11:33</div><div class="t fr" style="left:583px;top:269px">MSM-Datei</div><div class="t frd" style="left:660px;top:270px;width:109px;text-align:right">14.842 KB</div><div class="t frd" style="left:439px;top:301px">09.05.2022 11:33</div><div class="t fr" style="left:583px;top:300px">PNG-Datei</div><div class="t frd" style="left:660px;top:301px;width:109px;text-align:right">54 KB</div><svg class="abs" style="left:39px;top:471px" width="16" height="13" viewBox="0 0 16 13"><path d="M0.5 1.3 Q0.5 0.3 1.5 0.3 H5.6 L7.2 1.8 H14.5 Q15.5 1.8 15.5 2.8 V3.5 H0.5Z" fill="#e8a716"/><path d="M0.5 3 H15.5 V11.7 Q15.5 12.7 14.5 12.7 H1.5 Q0.5 12.7 0.5 11.7Z" fill="url(#fgrad)"/></svg><div class="t nav" style="left:60px;top:472px">Bootable</div><svg class="abs" style="left:39px;top:503px" width="16" height="13" viewBox="0 0 16 13"><path d="M0.5 1.3 Q0.5 0.3 1.5 0.3 H5.6 L7.2 1.8 H14.5 Q15.5 1.8 15.5 2.8 V3.5 H0.5Z" fill="#e8a716"/><path d="M0.5 3 H15.5 V11.7 Q15.5 12.7 14.5 12.7 H1.5 Q0.5 12.7 0.5 11.7Z" fill="url(#fgrad)"/></svg><div class="t nav" style="left:60px;top:504px">faxbox</div><svg class="abs" style="left:39px;top:535px" width="16" height="13" viewBox="0 0 16 13"><path d="M0.5 1.3 Q0.5 0.3 1.5 0.3 H5.6 L7.2 1.8 H14.5 Q15.5 1.8 15.5 2.8 V3.5 H0.5Z" fill="#e8a716"/><path d="M0.5 3 H15.5 V11.7 Q15.5 12.7 14.5 12.7 H1.5 Q0.5 12.7 0.5 11.7Z" fill="url(#fgrad)"/></svg><div class="t nav" style="left:60px;top:536px">Zeitschriften</div><svg class="abs" style="left:30px;top:576px" width="18" height="12" viewBox="0 0 18 12"><path d="M4 11.5 H15 A3 3 0 0 0 15.5 5.6 A4.8 4.8 0 0 0 6.6 4.2 A3.6 3.6 0 0 0 4 11.5Z" fill="#1a8ee8"/><path d="M3.2 11.5 A3.2 3.2 0 0 1 5 5.5" fill="#0a6fd0"/></svg><div class="t nav" style="left:52px;top:576px">OneDrive - Perso</div><svg class="abs" style="left:31px;top:614px" width="17" height="16" viewBox="0 0 17 16"><rect x="0.5" y="0.5" width="16" height="11" rx="1" fill="#2fb9e8"/><rect x="0.5" y="0.5" width="16" height="11" rx="1" fill="url(#pcg)"/><rect x="7.5" y="11.5" width="2" height="3" fill="#9aa"/><rect x="4" y="14" width="9" height="1.3" fill="#bcc"/></svg><div class="t nav" style="left:52px;top:616px">Dieser PC</div><div class="abs" style="left:148px;top:465px;width:2px;height:45px;background:#8a8a8a;border-radius:1px"></div><div class="abs" style="left:159px;top:85px;width:1px;height:563px;background:#262626"></div><div class="abs" style="left:83px;top:655px;width:1px;height:11px;background:#e0e0e0"></div><div class="abs" style="left:916px;top:648px;width:21px;height:23px;background:#555;border:1px solid #777"></div><svg class="abs" style="left:919px;top:651px" width="15" height="17" viewBox="0 0 15 17"><rect x="0.5" y="0.5" width="14" height="16" rx="2" fill="#d8d8d8"/><path d="M2.5 4H12.5M2.5 7H12.5M2.5 10H12.5M2.5 13H12.5" stroke="#111" stroke-width="1.2"/></svg><svg class="abs" style="left:941px;top:651px" width="16" height="16" viewBox="0 0 16 16"><rect x="0.7" y="0.7" width="14.6" height="14.6" rx="2" fill="#fff" stroke="#bbb" stroke-width="1.2"/><rect x="2.5" y="2.5" width="11" height="8" fill="#fff" stroke="#222" stroke-width="0.8"/><path d="M2.5 12.5H13.5" stroke="#444" stroke-width="1"/></svg></div><div class="abs dm" style="left:30px;top:232px;width:779px;height:570px"><svg class="abs" style="left:8px;top:7px" width="16" height="16" viewBox="0 0 16 16"><rect x="6" y="0.5" width="4" height="7" fill="#333"/><rect x="7.3" y="2" width="1.4" height="1.4" fill="#0f0"/><rect x="1" y="7" width="14" height="8" fill="#d6d6d6" stroke="#888" stroke-width="0.8"/><rect x="4" y="9" width="2" height="3" fill="#333"/><rect x="10" y="9" width="2" height="3" fill="#333"/></svg><div class="t dmttl" style="left:30px;top:10px">Geräte-Manager</div><div class="abs" style="left:660px;top:14px;width:10px;height:1px;background:#8a8a8a"></div><div class="abs" style="left:705px;top:9px;width:10px;height:10px;border:1px solid #8a8a8a"></div><svg class="abs" style="left:751px;top:9px" width="10" height="10" viewBox="0 0 10 10"><path d="M0.5 0.5L9.5 9.5M9.5 0.5L0.5 9.5" stroke="#8a8a8a" stroke-width="1"/></svg><div class="abs" style="left:1px;top:30px;width:777px;height:22px;background:#fff"></div><div class="t dmm" style="left:10px;top:35px">Datei</div><div class="t dmm" style="left:53px;top:35px">Aktion</div><div class="t dmm" style="left:104px;top:35px">Ansicht</div><div class="t dmm" style="left:160px;top:35px">?</div><div class="abs" style="left:1px;top:52px;width:777px;height:1px;background:#d8d8d8"></div><div class="abs" style="left:1px;top:53px;width:777px;height:22px;background:#fff"></div><div class="abs" style="left:1px;top:75px;width:777px;height:7px;background:#f0f0f0;border-top:1px solid #dcdcdc"></div><div class="abs" style="left:1px;top:81px;width:777px;height:2px;background:#8a8a8a;border-top:1px solid #b8b8b8"></div><svg class="abs" style="left:0;top:54px" width="320" height="22" viewBox="0 0 320 22"><defs><linearGradient id="arg" x1="0" y1="0" x2="0" y2="1"><stop offset="0" stop-color="#b0b0b0"/><stop offset="1" stop-color="#6a6a6a"/></linearGradient></defs><path d="M5 12.5 L12 5.5 V9.5 H20 V15.5 H12 V19.5 Z" fill="url(#arg)" stroke="#666" stroke-width="0.8"/><path d="M44 12.5 L37 5.5 V9.5 H28 V15.5 H37 V19.5 Z" fill="url(#arg)" stroke="#666" stroke-width="0.8"/><path d="M50.5 2V19.5" stroke="#777" stroke-width="1"/><path d="M81.5 2V19.5" stroke="#777" stroke-width="1"/><path d="M112.5 2V19.5" stroke="#777" stroke-width="1"/><path d="M166.5 2V19.5" stroke="#777" stroke-width="1"/><path d="M197.5 2V19.5" stroke="#777" stroke-width="1"/><path d="M228.5 2V19.5" stroke="#777" stroke-width="1"/><rect x="59.5" y="5.5" width="15" height="12" fill="#fff" stroke="#7a8aa0"/><path d="M59.5 8.5H74.5" stroke="#7a8aa0"/><path d="M66 13L70 10.5V15.5Z" fill="#3bb54a"/><path d="M61.5 11H63.5M61.5 13H63.5M61.5 15H63.5" stroke="#3a6fd0"/><rect x="90.5" y="4.5" width="15" height="14" rx="1" fill="#f4f4f4" stroke="#7a8aa0"/><path d="M93 9H103M93 12H103M93 15H103" stroke="#8aa" stroke-width="0.8"/><rect x="96" y="17" width="4" height="2" fill="#3aa0e0"/><rect x="122" y="4" width="13" height="15" fill="#2a3f9f"/><text x="128.5" y="16" font-size="12" text-anchor="middle" fill="#fff" font-family="Liberation Sans">?</text><rect x="144.5" y="5.5" width="15" height="12" fill="#fff" stroke="#7a8aa0"/><path d="M144.5 8.5H159.5" stroke="#7a8aa0"/><path d="M148 10.5L152 13L148 15.5Z" fill="#3bb54a"/><path d="M155 11H157M155 13H157M155 15H157" stroke="#3a6fd0"/><path d="M180 2 H187 L189 4 V12 H180Z" fill="#f4f4f4" stroke="#bbb" stroke-width="0.6"/><circle cx="180" cy="13" r="4.2" fill="none" stroke="#9a9a9a" stroke-width="2.6" stroke-dasharray="1.6 1.2"/><circle cx="180" cy="13" r="3" fill="none" stroke="#8a8a8a" stroke-width="1.2"/><path d="M187 9L191 13H189V15H185V13H183Z" fill="#2fbf3a"/><path d="M185 16.5H189M185 18.5H189" stroke="#2fbf3a" stroke-width="1"/><rect x="206" y="3" width="16" height="11" fill="#4fb0e8"/><circle cx="215" cy="9" r="4" fill="#cfe8f8" stroke="#3a7ab0" stroke-width="0.8"/><path d="M212 12L208 17" stroke="#333" stroke-width="1.3"/><path d="M206 17H222" stroke="#3a7ab0" stroke-width="1"/><rect x="241" y="3" width="5" height="14" fill="#333"/><rect x="242.3" y="5" width="1.4" height="1.4" fill="#0e0"/><path d="M248 10L253 15H250V19H246V15H243Z" fill="#2fbf3a"/><rect x="239" y="17" width="6" height="2" fill="#111"/><path d="M262 5L274 17M274 5L262 17" stroke="#d01010" stroke-width="2.6"/><circle cx="291" cy="11" r="7.5" fill="#fff" stroke="#555" stroke-width="0.9"/><path d="M291 6V12 M287.5 10L291 14.5L294.5 10Z" stroke="#111" stroke-width="1.4" fill="#111"/></svg><div class="abs" style="left:1px;top:83px;width:777px;height:462px;background:#fff;border-left:1px solid #a0a0a0"></div><div class="abs" style="left:1px;top:83px;width:777px;height:462px;overflow:hidden"><svg class="abs" style="left:7px;top:7px" width="10" height="6" viewBox="0 0 10 6"><path d="M0.8 0.8L5 5L9.2 0.8" stroke="#404040" stroke-width="1.2" fill="none"/></svg><svg class="abs" style="left:24px;top:1px" width="16" height="16" viewBox="0 0 16 16"><rect x="6" y="0.5" width="4" height="7" fill="#333"/><rect x="7.3" y="2" width="1.4" height="1.4" fill="#0f0"/><rect x="1" y="7" width="14" height="8" fill="#d6d6d6" stroke="#888" stroke-width="0.8"/><rect x="4" y="9" width="2" height="3" fill="#333"/><rect x="10" y="9" width="2" height="3" fill="#333"/></svg><div class="t dmt" style="left:44px;top:4px">Desktop</div><svg class="abs" style="left:28px;top:23px" width="6" height="10" viewBox="0 0 6 10"><path d="M0.8 0.8L5 5L0.8 9.2" stroke="#808080" stroke-width="1.1" fill="none"/></svg><svg class="abs" style="left:43px;top:19px" width="16" height="16" viewBox="0 0 16 16"><rect x="6" y="2" width="8" height="13" rx="3" fill="#3aa84a" stroke="#2a6a30" stroke-width="0.6"/><ellipse cx="10" cy="3.5" rx="4" ry="2" fill="#e8f0ea" stroke="#889" stroke-width="0.5"/><path d="M1 9.5H4M1 11.5H4" stroke="#d4a017" stroke-width="1.1"/><path d="M4 8 H7 A3 3 0 0 1 7 13 H4Z" fill="#333"/><path d="M9 12 C12 14 14 12 14 9" stroke="#222" stroke-width="1" fill="none"/><path d="M2 1 L6 6" stroke="#333" stroke-width="0.7"/></svg><div class="t dmt" style="left:63px;top:22px">Akkus</div><svg class="abs" style="left:26px;top:43px" width="10" height="6" viewBox="0 0 10 6"><path d="M0.8 0.8L5 5L9.2 0.8" stroke="#404040" stroke-width="1.2" fill="none"/></svg><svg class="abs" style="left:43px;top:37px" width="16" height="16" viewBox="0 0 16 16"><rect x="1" y="1" width="5" height="14" fill="#2a2a2a"/><rect x="2" y="3" width="1.4" height="1.4" fill="#0d0"/><rect x="0" y="14" width="7" height="2" fill="#111"/><circle cx="11" cy="5" r="4.3" fill="#fff" stroke="#999" stroke-width="0.7"/><text x="11" y="7.3" font-size="6.5" text-anchor="middle" fill="#2060d0" font-family="Liberation Sans">?</text></svg><div class="t dmt" style="left:63px;top:40px">Andere Geräte</div><svg class="abs" style="left:62px;top:55px" width="16" height="16" viewBox="0 0 16 16"><rect x="1" y="1" width="5" height="14" fill="#2a2a2a"/><rect x="2" y="3" width="1.4" height="1.4" fill="#0d0"/><rect x="0" y="14" width="7" height="2" fill="#111"/><circle cx="11" cy="5" r="4.3" fill="#fff" stroke="#999" stroke-width="0.7"/><text x="11" y="7.3" font-size="6.5" text-anchor="middle" fill="#2060d0" font-family="Liberation Sans">?</text></svg><div class="t dmt" style="left:82px;top:58px">Bluetooth-Peripheriegerät</div><svg class="abs" style="left:62px;top:73px" width="16" height="16" viewBox="0 0 16 16"><rect x="1" y="1" width="5" height="14" fill="#2a2a2a"/><rect x="2" y="3" width="1.4" height="1.4" fill="#0d0"/><rect x="0" y="14" width="7" height="2" fill="#111"/><circle cx="11" cy="5" r="4.3" fill="#fff" stroke="#999" stroke-width="0.7"/><text x="11" y="7.3" font-size="6.5" text-anchor="middle" fill="#2060d0" font-family="Liberation Sans">?</text></svg><div class="t dmt" style="left:82px;top:76px">interaction</div><svg class="abs" style="left:62px;top:91px" width="16" height="16" viewBox="0 0 16 16"><rect x="1" y="1" width="5" height="14" fill="#2a2a2a"/><rect x="2" y="3" width="1.4" height="1.4" fill="#0d0"/><rect x="0" y="14" width="7" height="2" fill="#111"/><circle cx="11" cy="5" r="4.3" fill="#fff" stroke="#999" stroke-width="0.7"/><text x="11" y="7.3" font-size="6.5" text-anchor="middle" fill="#2060d0" font-family="Liberation Sans">?</text></svg><div class="t dmt" style="left:82px;top:94px">SAP</div><svg class="abs" style="left:62px;top:109px" width="16" height="16" viewBox="0 0 16 16"><rect x="1" y="1" width="5" height="14" fill="#2a2a2a"/><rect x="2" y="3" width="1.4" height="1.4" fill="#0d0"/><rect x="0" y="14" width="7" height="2" fill="#111"/><circle cx="11" cy="5" r="4.3" fill="#fff" stroke="#999" stroke-width="0.7"/><text x="11" y="7.3" font-size="6.5" text-anchor="middle" fill="#2060d0" font-family="Liberation Sans">?</text></svg><div class="t dmt" style="left:82px;top:112px">SAP</div><svg class="abs" style="left:62px;top:127px" width="16" height="16" viewBox="0 0 16 16"><rect x="1" y="1" width="5" height="14" fill="#2a2a2a"/><rect x="2" y="3" width="1.4" height="1.4" fill="#0d0"/><rect x="0" y="14" width="7" height="2" fill="#111"/><circle cx="11" cy="5" r="4.3" fill="#fff" stroke="#999" stroke-width="0.7"/><text x="11" y="7.3" font-size="6.5" text-anchor="middle" fill="#2060d0" font-family="Liberation Sans">?</text></svg><div class="t dmt" style="left:82px;top:130px">SMS/MMS</div><svg class="abs" style="left:28px;top:149px" width="6" height="10" viewBox="0 0 6 10"><path d="M0.8 0.8L5 5L0.8 9.2" stroke="#808080" stroke-width="1.1" fill="none"/></svg><svg class="abs" style="left:43px;top:145px" width="16" height="16" viewBox="0 0 16 16"><rect x="4" y="0.5" width="8" height="4" fill="#d8d8d8" stroke="#888" stroke-width="0.6"/><path d="M5.5 1.5V3.5M7 1.5V3.5M8.5 1.5V3.5M10 1.5V3.5" stroke="#777" stroke-width="0.5"/><rect x="2.5" y="4.5" width="11" height="7" fill="#4a4a4a"/><rect x="3" y="5" width="10" height="2" fill="#777"/><rect x="5.5" y="11.5" width="5" height="4" fill="#2a2a2a"/></svg><div class="t dmt" style="left:63px;top:148px">Anschlüsse (COM &amp; LPT)</div><svg class="abs" style="left:28px;top:167px" width="6" height="10" viewBox="0 0 6 10"><path d="M0.8 0.8L5 5L0.8 9.2" stroke="#808080" stroke-width="1.1" fill="none"/></svg><svg class="abs" style="left:43px;top:163px" width="16" height="16" viewBox="0 0 16 16"><rect x="3" y="5" width="3.5" height="6" fill="#7a7a7a"/><path d="M6.5 5 L11 0.8 V15.2 L6.5 11Z" fill="#c4c4c4" stroke="#666" stroke-width="0.7"/><path d="M8 3.5 V12.5" stroke="#e8e8e8" stroke-width="1"/></svg><div class="t dmt" style="left:63px;top:166px">Audio, Video und Gamecontroller</div><svg class="abs" style="left:28px;top:185px" width="6" height="10" viewBox="0 0 6 10"><path d="M0.8 0.8L5 5L0.8 9.2" stroke="#808080" stroke-width="1.1" fill="none"/></svg><svg class="abs" style="left:43px;top:181px" width="16" height="16" viewBox="0 0 16 16"><rect x="3" y="5" width="3.5" height="6" fill="#7a7a7a"/><path d="M6.5 5 L11 0.8 V15.2 L6.5 11Z" fill="#c4c4c4" stroke="#666" stroke-width="0.7"/><path d="M8 3.5 V12.5" stroke="#e8e8e8" stroke-width="1"/></svg><div class="t dmt" style="left:63px;top:184px">Audioeingänge und -ausgänge</div><svg class="abs" style="left:28px;top:203px" width="6" height="10" viewBox="0 0 6 10"><path d="M0.8 0.8L5 5L0.8 9.2" stroke="#808080" stroke-width="1.1" fill="none"/></svg><svg class="abs" style="left:43px;top:199px" width="16" height="16" viewBox="0 0 16 16"><path d="M2 2L14 5" stroke="#333" stroke-width="1"/><rect x="6" y="7" width="9" height="8" fill="#ccc" stroke="#666" stroke-width="0.6"/><circle cx="11" cy="11" r="2" fill="#333"/><path d="M1 10H6" stroke="#333" stroke-width="1.2"/></svg><div class="t dmt" style="left:63px;top:202px">Bildverarbeitungsgeräte</div><svg class="abs" style="left:28px;top:221px" width="6" height="10" viewBox="0 0 6 10"><path d="M0.8 0.8L5 5L0.8 9.2" stroke="#808080" stroke-width="1.1" fill="none"/></svg><svg class="abs" style="left:43px;top:217px" width="16" height="16" viewBox="0 0 16 16"><rect x="1.5" y="0.5" width="13" height="15" fill="#e8efe8" stroke="#8a9" stroke-width="0.8"/><ellipse cx="8" cy="8" rx="4" ry="5" fill="none" stroke="#777" stroke-width="0.8"/><ellipse cx="8" cy="8.5" rx="2" ry="3" fill="none" stroke="#777" stroke-width="0.8"/></svg><div class="t dmt" style="left:63px;top:220px">Biometrische Geräte</div><svg class="abs" style="left:28px;top:239px" width="6" height="10" viewBox="0 0 6 10"><path d="M0.8 0.8L5 5L0.8 9.2" stroke="#808080" stroke-width="1.1" fill="none"/></svg><svg class="abs" style="left:43px;top:235px" width="16" height="16" viewBox="0 0 16 16"><ellipse cx="8" cy="8" rx="6" ry="7.5" fill="#1e73e8"/><path d="M5 5L11 10.5L8 13V3L11 5.5L5 11" stroke="#fff" stroke-width="1.1" fill="none"/></svg><div class="t dmt" style="left:63px;top:238px">Bluetooth</div><svg class="abs" style="left:28px;top:257px" width="6" height="10" viewBox="0 0 6 10"><path d="M0.8 0.8L5 5L0.8 9.2" stroke="#808080" stroke-width="1.1" fill="none"/></svg><svg class="abs" style="left:43px;top:253px" width="16" height="16" viewBox="0 0 16 16"><rect x="0.5" y="1" width="15" height="10" fill="#5ac8fa" stroke="#3a8ab0" stroke-width="0.6"/><rect x="6" y="11" width="4" height="2" fill="#999"/><rect x="2" y="13.5" width="12" height="1.5" fill="#aaa"/></svg><div class="t dmt" style="left:63px;top:256px">Computer</div><svg class="abs" style="left:28px;top:275px" width="6" height="10" viewBox="0 0 6 10"><path d="M0.8 0.8L5 5L0.8 9.2" stroke="#808080" stroke-width="1.1" fill="none"/></svg><svg class="abs" style="left:43px;top:271px" width="16" height="16" viewBox="0 0 16 16"><rect x="1" y="4" width="14" height="7" rx="1.5" fill="#5a5a5a"/><rect x="1" y="4" width="14" height="2.2" rx="1" fill="#8a8a8a"/><rect x="4" y="5" width="6" height="1" fill="#3fd06a"/><rect x="12" y="5" width="1.4" height="1.2" fill="#3fd06a"/><rect x="3" y="9" width="10" height="5.5" fill="#fafafa" stroke="#999" stroke-width="0.5"/><rect x="3.5" y="11" width="9" height="1.3" fill="#111"/></svg><div class="t dmt" style="left:63px;top:274px">Drucker</div><svg class="abs" style="left:28px;top:293px" width="6" height="10" viewBox="0 0 6 10"><path d="M0.8 0.8L5 5L0.8 9.2" stroke="#808080" stroke-width="1.1" fill="none"/></svg><svg class="abs" style="left:43px;top:289px" width="16" height="16" viewBox="0 0 16 16"><rect x="1" y="4" width="14" height="7" rx="1.5" fill="#5a5a5a"/><rect x="1" y="4" width="14" height="2.2" rx="1" fill="#8a8a8a"/><rect x="4" y="5" width="6" height="1" fill="#3fd06a"/><rect x="12" y="5" width="1.4" height="1.2" fill="#3fd06a"/><rect x="3" y="9" width="10" height="5.5" fill="#fafafa" stroke="#999" stroke-width="0.5"/><rect x="3.5" y="11" width="9" height="1.3" fill="#111"/></svg><div class="t dmt" style="left:63px;top:292px">Druckwarteschlangen</div><svg class="abs" style="left:28px;top:311px" width="6" height="10" viewBox="0 0 6 10"><path d="M0.8 0.8L5 5L0.8 9.2" stroke="#808080" stroke-width="1.1" fill="none"/></svg><svg class="abs" style="left:43px;top:307px" width="16" height="16" viewBox="0 0 16 16"><rect x="0.5" y="2" width="15" height="8" fill="#ddd" stroke="#777" stroke-width="0.6"/><path d="M2 4H14M2 6H14M2 8H14" stroke="#888" stroke-width="0.6"/><rect x="1" y="10" width="6" height="5" rx="2" fill="#444"/><rect x="9" y="10" width="6" height="5" rx="2" fill="#444"/><rect x="6" y="11" width="4" height="2" fill="#36c"/></svg><div class="t dmt" style="left:63px;top:310px">Eingabegeräte (Human Interface Devices)</div><svg class="abs" style="left:28px;top:329px" width="6" height="10" viewBox="0 0 6 10"><path d="M0.8 0.8L5 5L0.8 9.2" stroke="#808080" stroke-width="1.1" fill="none"/></svg><svg class="abs" style="left:43px;top:325px" width="16" height="16" viewBox="0 0 16 16"><rect x="3.5" y="0.5" width="9" height="15" rx="0.5" fill="#3a3a3a" stroke="#111" stroke-width="0.8"/><path d="M6.5 0.5 A1.5 1.5 0 0 0 9.5 0.5" fill="#fff"/><path d="M1.5 2.5H3.5M1.5 4.5H3.5M1.5 6.5H3.5M1.5 8.5H3.5M1.5 10.5H3.5M1.5 12.5H3.5M1.5 14.5H3.5M12.5 2.5H14.5M12.5 4.5H14.5M12.5 6.5H14.5M12.5 8.5H14.5M12.5 10.5H14.5M12.5 12.5H14.5M12.5 14.5H14.5" stroke="#222" stroke-width="0.9"/></svg><div class="t dmt" style="left:63px;top:328px">Firmware</div><svg class="abs" style="left:28px;top:347px" width="6" height="10" viewBox="0 0 6 10"><path d="M0.8 0.8L5 5L0.8 9.2" stroke="#808080" stroke-width="1.1" fill="none"/></svg><svg class="abs" style="left:43px;top:343px" width="16" height="16" viewBox="0 0 16 16"><rect x="0.5" y="0.5" width="15" height="10" fill="#52b7f0" stroke="#2a7ab0" stroke-width="0.6"/><rect x="6" y="7" width="10" height="7" fill="#2b8a3e"/><rect x="7" y="14" width="8" height="2" fill="#e0b000"/></svg><div class="t dmt" style="left:63px;top:346px">Grafikkarten</div><svg class="abs" style="left:28px;top:365px" width="6" height="10" viewBox="0 0 6 10"><path d="M0.8 0.8L5 5L0.8 9.2" stroke="#808080" stroke-width="1.1" fill="none"/></svg><svg class="abs" style="left:43px;top:361px" width="16" height="16" viewBox="0 0 16 16"><circle cx="8" cy="6.5" r="6" fill="#ddd" stroke="#666" stroke-width="0.8"/><circle cx="8" cy="6.5" r="3" fill="#333"/><circle cx="8" cy="6.5" r="1.2" fill="#5a8ad0"/><path d="M8 12.5V15M4 15.3H12" stroke="#333" stroke-width="1.2"/></svg><div class="t dmt" style="left:63px;top:364px">Kameras</div><svg class="abs" style="left:28px;top:383px" width="6" height="10" viewBox="0 0 6 10"><path d="M0.8 0.8L5 5L0.8 9.2" stroke="#808080" stroke-width="1.1" fill="none"/></svg><svg class="abs" style="left:43px;top:379px" width="16" height="16" viewBox="0 0 16 16"><path d="M1.5 9 L3 6 H13 L14.5 9Z" fill="#d8d8d8"/><rect x="1.5" y="9" width="13" height="4.5" rx="0.5" fill="#3a3a3a"/><rect x="11.5" y="10.6" width="1.6" height="1.4" fill="#3ad060"/></svg><div class="t dmt" style="left:63px;top:382px">Laufwerke</div><svg class="abs" style="left:28px;top:401px" width="6" height="10" viewBox="0 0 6 10"><path d="M0.8 0.8L5 5L0.8 9.2" stroke="#808080" stroke-width="1.1" fill="none"/></svg><svg class="abs" style="left:43px;top:397px" width="16" height="16" viewBox="0 0 16 16"><rect x="3.5" y="0.5" width="9" height="15" rx="4.5" fill="#8a98aa" stroke="#222" stroke-width="1.2"/><rect x="7.3" y="2" width="1.4" height="5" rx="0.7" fill="#2a2a2a"/></svg><div class="t dmt" style="left:63px;top:400px">Mäuse und andere Zeigegeräte</div><svg class="abs" style="left:26px;top:421px" width="10" height="6" viewBox="0 0 10 6"><path d="M0.8 0.8L5 5L9.2 0.8" stroke="#404040" stroke-width="1.2" fill="none"/></svg><svg class="abs" style="left:43px;top:415px" width="16" height="16" viewBox="0 0 16 16"><rect x="0.5" y="1" width="4" height="10" rx="1" fill="#2a2a2a"/><rect x="4.5" y="0.5" width="10" height="9" fill="#f0f0f0" stroke="#777" stroke-width="0.5"/><rect x="6" y="1.8" width="7" height="2.2" fill="#3aa0e0"/><path d="M6.5 5.5H7.5M8.5 5.5H9.5M10.5 5.5H11.5M6.5 7.5H7.5M8.5 7.5H9.5M10.5 7.5H11.5" stroke="#333" stroke-width="1"/><rect x="12.5" y="7.5" width="1.3" height="1.3" fill="#2c2"/><path d="M2.5 10.5 H14 L15.5 15.5 H2Z" fill="#d0d0d0" stroke="#666" stroke-width="0.5"/><rect x="5" y="12" width="7" height="2.2" fill="#1a2a3a"/><path d="M6 13.1H7M8 13.1H9M10 13.1H11" stroke="#3aa0e0" stroke-width="0.8"/></svg><div class="t dmt" style="left:63px;top:418px">Modems</div><svg class="abs" style="left:62px;top:433px" width="16" height="16" viewBox="0 0 16 16"><rect x="0.5" y="1" width="4" height="10" rx="1" fill="#2a2a2a"/><rect x="4.5" y="0.5" width="10" height="9" fill="#f0f0f0" stroke="#777" stroke-width="0.5"/><rect x="6" y="1.8" width="7" height="2.2" fill="#3aa0e0"/><path d="M6.5 5.5H7.5M8.5 5.5H9.5M10.5 5.5H11.5M6.5 7.5H7.5M8.5 7.5H9.5M10.5 7.5H11.5" stroke="#333" stroke-width="1"/><rect x="12.5" y="7.5" width="1.3" height="1.3" fill="#2c2"/><path d="M2.5 10.5 H14 L15.5 15.5 H2Z" fill="#d0d0d0" stroke="#666" stroke-width="0.5"/><rect x="5" y="12" width="7" height="2.2" fill="#1a2a3a"/><path d="M6 13.1H7M8 13.1H9M10 13.1H11" stroke="#3aa0e0" stroke-width="0.8"/></svg><div class="t dmt" style="left:82px;top:436px">Qualcomm HS-USB Modem 9091</div><svg class="abs" style="left:62px;top:451px" width="16" height="16" viewBox="0 0 16 16"><rect x="0.5" y="1" width="4" height="10" rx="1" fill="#2a2a2a"/><rect x="4.5" y="0.5" width="10" height="9" fill="#f0f0f0" stroke="#777" stroke-width="0.5"/><rect x="6" y="1.8" width="7" height="2.2" fill="#3aa0e0"/><path d="M6.5 5.5H7.5M8.5 5.5H9.5M10.5 5.5H11.5M6.5 7.5H7.5M8.5 7.5H9.5M10.5 7.5H11.5" stroke="#333" stroke-width="1"/><rect x="12.5" y="7.5" width="1.3" height="1.3" fill="#2c2"/><path d="M2.5 10.5 H14 L15.5 15.5 H2Z" fill="#d0d0d0" stroke="#666" stroke-width="0.5"/><rect x="5" y="12" width="7" height="2.2" fill="#1a2a3a"/><path d="M6 13.1H7M8 13.1H9M10 13.1H11" stroke="#3aa0e0" stroke-width="0.8"/></svg><div class="t dmt" style="left:82px;top:454px">Standardmäßige Modem-über-Bluetooth-Verbindung</div></div><div class="abs" style="left:761px;top:83px;width:17px;height:462px;background:#f0f0f0;border-left:1px solid #e6e6e6"></div><div class="abs" style="left:1px;top:545px;width:777px;height:1px;background:#d8d8d8"></div><div class="abs" style="left:1px;top:546px;width:777px;height:23px;background:#f0f0f0;border-radius:0 0 7px 7px"></div><div class="abs" style="left:558px;top:548px;width:1px;height:20px;background:#d0d0d0"></div><div class="abs" style="left:691px;top:548px;width:1px;height:20px;background:#d0d0d0"></div></div><div class="abs pdc" style="left:628px;top:274px;width:665px;height:483px"><div class="abs" style="left:0;top:0;width:665px;height:25px;background:#f3f3f3"></div><svg class="abs" style="left:4px;top:5px" width="16" height="16" viewBox="0 0 24 24"><circle cx="12" cy="12" r="11.5" fill="url(#pdco)"/><path d="M9 21 C6 17 7 10 12 8 C11 10 11.5 11.5 13 11 C15 10 15 7 13.5 5.5 C18 6 22 9 22.5 13 C22 19 16 23 9 21Z" fill="url(#pdcw)"/></svg><div class="t pdcttl" style="left:23px;top:7px">Advanced PDC Tool</div><svg class="abs" style="left:644px;top:7px" width="11" height="11" viewBox="0 0 11 11"><path d="M0.5 0.5L10.5 10.5M10.5 0.5L0.5 10.5" stroke="#8a8a8a" stroke-width="1"/></svg><div class="abs" style="left:1px;top:25px;width:663px;height:18px;background:#fff"></div><div class="t pdcm" style="left:8px;top:29px">Help</div><div class="t pdct" style="left:17px;top:78px">Device:</div><div class="abs" style="left:60px;top:74px;width:594px;height:21px;background:#fff;border:1px solid #7a7a7a;border-radius:2px"></div><div class="t pdct" style="left:65px;top:78px">Qualcomm HS-USB WWAN Adapter 9091</div><svg class="abs" style="left:640px;top:82px" width="10" height="6" viewBox="0 0 10 6"><path d="M0.5 0.5L5 5L9.5 0.5" stroke="#444" stroke-width="1.1" fill="none"/></svg><div class="abs" style="left:11px;top:100px;width:644px;height:322px;background:#fff;border:1px solid #828790"></div><div class="t pdct" style="left:18px;top:109px">Description</div><div class="t pdct" style="left:118px;top:109px">Type</div><div class="t pdct" style="left:168px;top:109px">Size</div><div class="t pdct" style="left:248px;top:109px">Sub0</div><div class="t pdct" style="left:308px;top:109px">Sub1</div><div class="t pdct" style="left:368px;top:109px">Sub2</div><div class="t pdct" style="left:428px;top:109px">Version</div><div class="t pdct" style="left:508px;top:109px">ID</div><div class="abs" style="left:112px;top:102px;width:1px;height:23px;background:#e5e5e5"></div><div class="abs" style="left:162px;top:102px;width:1px;height:23px;background:#e5e5e5"></div><div class="abs" style="left:242px;top:102px;width:1px;height:23px;background:#e5e5e5"></div><div class="abs" style="left:302px;top:102px;width:1px;height:23px;background:#e5e5e5"></div><div class="abs" style="left:362px;top:102px;width:1px;height:23px;background:#e5e5e5"></div><div class="abs" style="left:422px;top:102px;width:1px;height:23px;background:#e5e5e5"></div><div class="abs" style="left:502px;top:102px;width:1px;height:23px;background:#e5e5e5"></div><div class="abs" style="left:582px;top:102px;width:1px;height:23px;background:#e5e5e5"></div><div class="t pdct" style="left:11px;top:443px">Frame Size:</div><div class="abs" style="left:79px;top:438px;width:58px;height:22px;background:#fff;border-bottom:1px solid #8a8a8a;border-radius:2px;box-shadow:0 0 0 1px #e6e6e6"></div><div class="t pdct" style="left:83px;top:442px">900</div><div class="abs btnd" style="left:279px;top:435px;width:73px;height:20px">Load</div><div class="abs btnd" style="left:375px;top:435px;width:73px;height:20px">Remove</div><div class="abs btnd" style="left:477px;top:435px;width:73px;height:20px">Activate</div><div class="abs btna" style="left:580px;top:434px;width:73px;height:21px">Advanced...</div></div><div class="abs mb" style="left:788px;top:464px;width:405px;height:146px"><div class="abs" style="left:0;top:0;width:405px;height:25px;background:#f9eeee"></div><div class="t mbttl" style="left:4px;top:8px">PDC</div><svg class="abs" style="left:384px;top:7px" width="11" height="11" viewBox="0 0 11 11"><path d="M0.5 0.5L10.5 10.5M10.5 0.5L0.5 10.5" stroke="#111" stroke-width="1.1"/></svg><div class="abs" style="left:0;top:25px;width:405px;height:78px;background:#fff"></div><svg class="abs" style="left:22px;top:49px" width="30" height="30" viewBox="0 0 30 30"><defs><linearGradient id="wg" x1="0" y1="0" x2="0" y2="1"><stop offset="0" stop-color="#ffe14a"/><stop offset="1" stop-color="#f5b800"/></linearGradient></defs><path d="M15 1.5 C16 1.5 16.6 2 17.2 3 L28.6 25.6 C29.4 27.2 28.6 28.5 26.8 28.5 H3.2 C1.4 28.5 0.6 27.2 1.4 25.6 L12.8 3 C13.4 2 14 1.5 15 1.5Z" fill="url(#wg)" stroke="#e3a400" stroke-width="0.6"/><rect x="13.8" y="8" width="2.4" height="12" fill="#111"/><circle cx="15" cy="23.8" r="1.6" fill="#111"/></svg><div class="t mbt" style="left:62px;top:53px">QMI connection not ready, please use USB drvier version</div><div class="t mbt" style="left:62px;top:66px">1.00.32 or later and fix the connection before using PDC tool</div><div class="abs" style="left:0;top:103px;width:405px;height:43px;background:#f0f0f0"></div><div class="abs btnok" style="left:312px;top:114px;width:78px;height:21px;line-height:19px">OK</div></div><div class="abs tbar" style="left:0;top:1032px;width:1920px;height:48px"><svg class="abs" style="left:19px;top:12px" width="24" height="22" viewBox="0 0 24 22"><defs><radialGradient id="sun" cx="0.4" cy="0.35" r="0.7"><stop offset="0" stop-color="#ffd54a"/><stop offset="1" stop-color="#f59b00"/></radialGradient></defs><circle cx="10" cy="10" r="9" fill="url(#sun)"/><path d="M9 19 H20 A3.3 3.3 0 0 0 20 12.4 A4.2 4.2 0 0 0 12.5 11.5 A3.6 3.6 0 0 0 9 19Z" fill="#e8eef8"/></svg><div class="t tbw1" style="left:50px;top:10px">22°C</div><div class="t tbw2" style="left:50px;top:26px">Meist sonnig</div><svg class="abs" style="left:707px;top:13px" width="23" height="23" viewBox="0 0 23 23"><defs><linearGradient id="wlg" x1="0" y1="0" x2="1" y2="1"><stop offset="0" stop-color="#7ee8fa"/><stop offset="1" stop-color="#0c9ef5"/></linearGradient></defs><path d="M0 1Q0 0 1 0H11V11H0Z M12 0H22Q23 0 23 1V11H12Z M0 12H11V23H1Q0 23 0 22Z M12 12H23V22Q23 23 22 23H12Z" fill="url(#wlg)"/></svg><svg class="abs" style="left:751px;top:13px" width="24" height="24" viewBox="0 0 24 24"><circle cx="9.5" cy="9.5" r="8" fill="#4a4850" stroke="#e6e6e6" stroke-width="2.6"/><path d="M15.5 15.5L21.5 21.5" stroke="#d8d8d8" stroke-width="2.8" stroke-linecap="round"/></svg><svg class="abs" style="left:795px;top:13px" width="25" height="23" viewBox="0 0 25 23"><rect x="0" y="6.5" width="18" height="16" rx="1.5" fill="#6a6a6a"/><rect x="6" y="0" width="18" height="16" rx="1.5" fill="#f2f2f2"/><rect x="6" y="6.5" width="12" height="9.5" fill="#bdbdbd"/></svg><svg class="abs" style="left:838px;top:12px" width="25" height="25" viewBox="0 0 25 25"><defs><linearGradient id="chg" x1="0" y1="0" x2="1" y2="1"><stop offset="0" stop-color="#8e7ae8"/><stop offset="1" stop-color="#5a48c8"/></linearGradient></defs><path d="M12.5 1 A11.5 11.5 0 1 1 6 22.5 L1.5 24 L2.8 19.5 A11.5 11.5 0 0 1 12.5 1Z" fill="url(#chg)"/><rect x="6.5" y="8.5" width="8.5" height="8" rx="1.5" fill="#fff"/><path d="M15.5 11 L19 9 V16 L15.5 14Z" fill="#fff"/></svg><svg class="abs" style="left:882px;top:13px" width="25" height="22" viewBox="0 0 25 22"><path d="M0 2Q0 0 2 0H9L11 2H23Q25 2 25 4V6H0Z" fill="#e7a812"/><path d="M0 5H25V20Q25 22 23 22H2Q0 22 0 20Z" fill="#ffd34e"/><rect x="6" y="13" width="13" height="9" rx="1" fill="#1f7ad8"/><rect x="6" y="17" width="13" height="1.5" fill="#0f5fb8"/></svg><svg class="abs" style="left:927px;top:12px" width="24" height="24" viewBox="0 0 24 24"><path d="M7 6 V3.5 Q7 1.5 9 1.5 H15 Q17 1.5 17 3.5 V6" stroke="#2aa8e8" stroke-width="2" fill="none"/><rect x="0.5" y="5.5" width="23" height="18" rx="2.5" fill="#f5f5f5"/><rect x="7.5" y="10.5" width="4" height="4" fill="#f35325"/><rect x="12.5" y="10.5" width="4" height="4" fill="#81bc06"/><rect x="7.5" y="15.5" width="4" height="4" fill="#05a6f0"/><rect x="12.5" y="15.5" width="4" height="4" fill="#ffba08"/></svg><svg class="abs" style="left:972px;top:11px" width="21" height="25" viewBox="0 0 21 25"><path d="M4 0.5 H17 L19.5 3.5 L20.5 7 L18.5 17 L10.5 24.5 L2.5 17 L0.5 7 L1.5 3.5Z" fill="#f04a24"/><path d="M6 6 L10.5 7.5 L15 6 L16 9 L14 13 L12.5 16 L10.5 17 L8.5 16 L7 13 L5 9Z" fill="#fff"/><path d="M8.2 11 L9.6 11.8 M12.8 11 L11.4 11.8 M9.5 15 L10.5 15.6 L11.5 15" stroke="#f04a24" stroke-width="1.1" fill="none"/></svg><svg class="abs" style="left:1014px;top:12px" width="25" height="25" viewBox="0 0 25 25"><circle cx="12.5" cy="12.5" r="11.8" fill="#1e8fe6" stroke="#cfe6fa" stroke-width="1.3"/><text x="12.5" y="19" font-size="17" font-weight="bold" text-anchor="middle" fill="#fff" font-family="Liberation Sans">?</text></svg><svg class="abs" style="left:1060px;top:13px" width="22" height="22" viewBox="0 0 48 48"><defs><linearGradient id="kpg2" x1="0" y1="0" x2="0" y2="1"><stop offset="0" stop-color="#3f8a2a"/><stop offset="1" stop-color="#6cb43e"/></linearGradient></defs><circle cx="24" cy="24" r="23" fill="#fff"/><circle cx="24" cy="24" r="20" fill="url(#kpg2)"/><circle cx="24" cy="13" r="8" fill="#fff"/><path d="M21 18 H27 V24 L29.5 26 L27 28 L29.5 30 L27 32 V38 L24 42 L21 38Z" fill="#fff"/><circle cx="24" cy="10.5" r="2.4" fill="#3f8a2a"/></svg><svg class="abs" style="left:1104px;top:13px" width="22" height="20" viewBox="0 0 22 20"><path d="M8 3 L13 1 L22 2 V14 L17 16 L8 15Z" fill="#d8d8d8"/><path d="M8 3 L13 1 L22 2 L17 4Z" fill="#f2f2f2"/><path d="M17 4 L22 2 V14 L17 16Z" fill="#a8a8a8"/><rect x="9" y="5" width="6" height="7" fill="#222"/><rect x="11" y="6.5" width="2" height="2" fill="#2ee05a"/><path d="M0 11 L5 9 L12 10 V18 L7 20 L0 19Z" fill="#e6e6e6"/><path d="M0 11 L5 9 L12 10 L7 12Z" fill="#fafafa"/><rect x="2" y="13" width="1.6" height="3.5" fill="#555"/><rect x="5.5" y="14" width="1.6" height="3.5" fill="#555"/></svg><svg class="abs" style="left:1147px;top:14px" width="22" height="19" viewBox="0 0 22 19"><rect x="0.5" y="0.5" width="21" height="18" fill="#000" stroke="#9a9a9a" stroke-width="1"/><rect x="1" y="1" width="20" height="1.8" fill="#c8c8c8"/><text x="2.2" y="9.5" font-size="6" fill="#e8e8e8" font-family="Liberation Mono">C:\</text><rect x="13" y="8.6" width="6.5" height="1" fill="#e8e8e8"/></svg><div class="abs" style="left:1183px;top:4px;width:40px;height:40px;background:#2b2a31;border-radius:4px;border:1px solid #34333a"></div><svg class="abs" style="left:1191px;top:12px" width="24" height="24" viewBox="0 0 24 24"><defs><radialGradient id="pdcw" cx="0.7" cy="0.65" r="0.65"><stop offset="0" stop-color="#fff"/><stop offset="0.6" stop-color="#f0f0f0"/><stop offset="1" stop-color="#c8c8c8"/></radialGradient><linearGradient id="pdco" x1="0" y1="0" x2="1" y2="1"><stop offset="0" stop-color="#ff9a10"/><stop offset="1" stop-color="#e05a00"/></linearGradient></defs><circle cx="12" cy="12" r="11.5" fill="url(#pdco)"/><path d="M9 21 C6 17 7 10 12 8 C11 10 11.5 11.5 13 11 C15 10 15 7 13.5 5.5 C18 6 22 9 22.5 13 C22 19 16 23 9 21Z" fill="url(#pdcw)"/></svg><div class="abs" style="left:892px;top:38.5px;width:6px;height:3px;border-radius:2px;background:#9d9d9d"></div><div class="abs" style="left:980px;top:38.5px;width:6px;height:3px;border-radius:2px;background:#9d9d9d"></div><div class="abs" style="left:1068px;top:38.5px;width:6px;height:3px;border-radius:2px;background:#9d9d9d"></div><div class="abs" style="left:1112px;top:38.5px;width:6px;height:3px;border-radius:2px;background:#9d9d9d"></div><div class="abs" style="left:1156px;top:38.5px;width:6px;height:3px;border-radius:2px;background:#9d9d9d"></div><div class="abs" style="left:1195px;top:38.5px;width:16px;height:3px;border-radius:2px;background:#f0907a"></div><svg class="abs" style="left:1676px;top:18px" width="14" height="9" viewBox="0 0 14 9"><path d="M1 8L7 2L13 8" stroke="#f0f0f0" stroke-width="1.3" fill="none"/></svg><svg class="abs" style="left:1706px;top:17px" width="17" height="12" viewBox="0 0 17 12"><path d="M3.5 11.5 H14 A3 3 0 0 0 14.3 5.6 A4.6 4.6 0 0 0 5.8 4.4 A3.6 3.6 0 0 0 3.5 11.5Z" fill="#d4d4d4"/><path d="M3 11.5 A3.2 3.2 0 0 1 4 5.2 L8 8 Z" fill="#9a9a9a"/></svg><svg class="abs" style="left:1739px;top:16px" width="17" height="14" viewBox="0 0 17 14"><path d="M1 5 A10.5 10.5 0 0 1 16 5 M3.5 7.6 A7 7 0 0 1 13.5 7.6 M6 10.2 A3.6 3.6 0 0 1 11 10.2" stroke="#f0f0f0" stroke-width="1.3" fill="none"/><circle cx="8.5" cy="12.6" r="1.2" fill="#f0f0f0"/></svg><svg class="abs" style="left:1762px;top:16px" width="18" height="15" viewBox="0 0 18 15"><path d="M1 5H4L8.5 1V14L4 10H1Z" stroke="#f0f0f0" stroke-width="1.1" fill="none"/><path d="M11 5 A3.5 3.5 0 0 1 11 10 M13.5 3 A6.5 6.5 0 0 1 13.5 12" stroke="#f0f0f0" stroke-width="1.1" fill="none"/><path d="M16 1.5 A9 9 0 0 1 16 13.5" stroke="#777" stroke-width="1.1" fill="none"/></svg><svg class="abs" style="left:1786px;top:14px" width="19" height="16" viewBox="0 0 19 16"><rect x="1" y="5" width="15" height="9" rx="1.5" stroke="#f0f0f0" stroke-width="1.2" fill="none"/><rect x="16.2" y="8" width="1.8" height="3.5" fill="#f0f0f0"/><path d="M5 1 L2.5 6 H5 L4 10 L8 4.5 H5.5 L7 1Z" fill="#f0f0f0"/></svg><div class="t tbc" style="left:1820px;top:9px;width:57px;text-align:right">16:30</div><div class="t tbc" style="left:1810px;top:26px;width:67px;text-align:right">09.05.2022</div><div class="abs" style="left:1884px;top:16px;width:16px;height:16px;border-radius:50%;background:#f07a5a;color:#1a1a1a;font-size:10px;text-align:center;line-height:16px">5</div></div></body></html>
